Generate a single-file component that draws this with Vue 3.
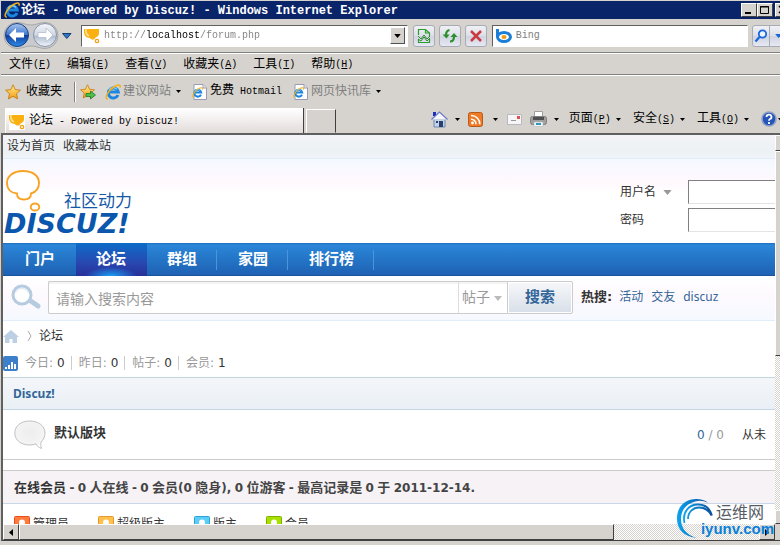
<script setup>
const menus = [
  ['文件', 'F'],
  ['编辑', 'E'],
  ['查看', 'V'],
  ['收藏夹', 'A'],
  ['工具', 'T'],
  ['帮助', 'H'],
]
const commands = [
  ['页面', 'P'],
  ['安全', 'S'],
  ['工具', 'O'],
]
const navItems = ['门户', '论坛', '群组', '家园', '排行榜']
const stats = [
  ['今日', 0],
  ['昨日', 0],
  ['帖子', 0],
  ['会员', 1],
]
const roles = [
  { name: '管理员', edge: '#e8501a', fill: '#ff7a3c' },
  { name: '超级版主', edge: '#e8962a', fill: '#ffc04c' },
  { name: '版主', edge: '#2aa4d8', fill: '#5ccdf5' },
  { name: '会员', edge: '#7fb000', fill: '#a8e000' },
]
</script>

<template>
  <svg class="defs" width="0" height="0" aria-hidden="true">
    <defs>
      <linearGradient id="gBlue" x1="0" y1="0" x2="0" y2="1">
        <stop offset="0" stop-color="#a9c6ef" />
        <stop offset=".48" stop-color="#3f77cf" />
        <stop offset=".52" stop-color="#0f3f9f" />
        <stop offset="1" stop-color="#2f8be8" />
      </linearGradient>
      <linearGradient id="gPale" x1="0" y1="0" x2="0" y2="1">
        <stop offset="0" stop-color="#f4f6fa" />
        <stop offset=".5" stop-color="#d0d8e4" />
        <stop offset=".55" stop-color="#b0bccf" />
        <stop offset="1" stop-color="#f0f6fc" />
      </linearGradient>
      <linearGradient id="gStar" x1="0" y1="0" x2="0" y2="1">
        <stop offset="0" stop-color="#fff09a" />
        <stop offset="1" stop-color="#f59a0c" />
      </linearGradient>
      <linearGradient id="gRing" x1="0" y1="0" x2="1" y2="0">
        <stop offset="0" stop-color="#0aa4f0" />
        <stop offset="1" stop-color="#0b4f9c" />
      </linearGradient>
      <radialGradient id="gBubble" cx=".5" cy=".4" r=".6">
        <stop offset="0" stop-color="#ededed" />
        <stop offset=".8" stop-color="#f4f4f4" />
        <stop offset="1" stop-color="#fff" />
      </radialGradient>
      <symbol id="ie" viewBox="0 0 16 16">
        <path d="M13 11A5 5 0 1 1 13.300 8H5" fill="none" stroke="#1c86e0" stroke-width="3" />
        <path d="M12 5.400A4.800 4.800 0 0 0 4 6" fill="none" stroke="#7fd4fb" stroke-width="1.200" />
        <path d="M2.800 14.900C.2 15 .8 11.500 3.400 8.200 6.600 3.800 12 .4 14.400 1.200c1 .4.9 1.600.5 2.600" fill="none" stroke="#f0b21c" stroke-width="1.500" />
      </symbol>
      <symbol id="fav" viewBox="0 0 16 16">
        <path fill="#fff" d="M0 0h16v16H0z" />
        <path d="M0 1h15v5c-1 3-3 3-4 4 0 2-4 2-5 0C2 10 0 7 0 4z" fill="#f9b010" />
        <path d="M2 1c-1 3 1 6 3 7" stroke="#ffe08a" stroke-width="1.800" fill="none" />
        <circle cx="13" cy="13" r="1.700" fill="#fff" stroke="#f9a010" stroke-width="1.300" />
      </symbol>
      <symbol id="star" viewBox="0 0 16 16">
        <path d="M8 .8l2.200 4.800 5.200.6-3.900 3.500 1.100 5.200L8 12.300l-4.600 2.600 1.100-5.200L.6 6.200l5.200-.6z" fill="url(#gStar)" stroke="#c87a10" stroke-width=".9" />
      </symbol>
      <symbol id="iepage" viewBox="0 0 16 16">
        <path d="M2 .5h9L14.500 4v11.500H2z" fill="#fff" stroke="#9a9ab0" />
        <path d="M11 .5V4h3.500" fill="#e4e4ee" stroke="#9a9ab0" />
        <use href="#ie" x="0" y="3" width="11" height="11" />
      </symbol>
      <symbol id="down" viewBox="0 0 5 3"><path d="M0 0h5L2.500 3z" fill="currentColor" /></symbol>
    </defs>
  </svg>

  <div class="window">
    <header class="titlebar">
      <svg width="16" height="16"><use href="#ie" /></svg>
      <h1>论坛<span> - Powered by Discuz! - Windows Internet Explorer</span></h1>
      <div class="winbtns">
        <button aria-label="Minimize"><svg width="12" height="10"><path d="M2 7h6v2H2z" /></svg></button>
        <button aria-label="Maximize"><svg width="12" height="10"><path d="M1.500 1.500h8v7h-8zM1 2h9" fill="none" stroke="#000" /></svg></button>
        <button class="close" aria-label="Close"><svg width="12" height="10"><path d="M2 1l7 7M9 1L2 8" stroke="#000" stroke-width="1.500" /></svg></button>
      </div>
    </header>

    <div class="toolbar">
      <div class="travel">
        <svg width="56" height="29" viewBox="0 0 56 29">
          <path d="M14 1.500C20 1.500 22 4 28 4S36 1.500 42 1.500a13 13 0 0 1 0 26C36 27.500 34 25 28 25s-8 2.500-14 2.500a13 13 0 0 1 0-26z" fill="#c8cacd" stroke="#a8a8aa" />
          <circle cx="14" cy="14" r="11.500" fill="url(#gBlue)" stroke="#1b3f80" />
          <circle cx="42" cy="14" r="11.500" fill="url(#gPale)" stroke="#8894a8" />
          <path d="M6 14l7-7v4.500h8v5h-8V21z" fill="#fff" />
          <path d="M50 14l-7-7v4.500h-8v5h8V21z" fill="#fff" stroke="#b4bccb" stroke-width=".8" />
        </svg>
        <svg class="recent" width="10" height="6" viewBox="0 0 10 6"><path d="M.5.500h8.500L4.800 5.500z" fill="#2f78c8" stroke="#123c70" /></svg>
      </div>
      <div class="field address">
        <svg width="16" height="16"><use href="#fav" /></svg>
        <input aria-label="Address" value="http://localhost/forum.php" />
        <button aria-label="Show addresses"><svg width="7" height="4" viewBox="0 0 5 3"><use href="#down" /></svg></button>
      </div>
      <button class="tool" aria-label="Compatibility view">
        <svg width="14" height="16"><path d="M1.500 7V1.500h7L12.500 5v3M1.500 11v3.500h11V11M8.500 1.500V5h4" fill="none" stroke="#2f9a2f" stroke-width="1.200" /><path d="M1 8l3 3 3-4 3 4 3-3M1 11l3 2 3-4 3 4 3-3" fill="none" stroke="#2f8a2f" /></svg>
      </button>
      <button class="tool" aria-label="Refresh">
        <svg width="16" height="16"><path d="M0.500 6.500l4 4 3-4zM8.500 9l3.500-4 3.500 4z" fill="#2b8f2b" /><path d="M7.500 2C5 2.500 4 4 4 7M8 13.500c3 0 4-2 4-5" fill="none" stroke="#2b8f2b" stroke-width="2.200" /></svg>
      </button>
      <button class="tool" aria-label="Stop">
        <svg width="14" height="14"><path d="M2 2l10 10M12 2L2 12" stroke="#c93a42" stroke-width="2.500" /></svg>
      </button>
      <div class="field bing">
        <svg width="17" height="16"><path d="M2.500 1v8" stroke="#1b7fd8" stroke-width="3" /><ellipse cx="9" cy="9" rx="6.500" ry="4.500" fill="none" stroke="#1b7fd8" stroke-width="3" /><ellipse cx="9" cy="9" rx="2.500" ry="2" fill="#f59a10" /></svg>
        <input aria-label="Search the web" placeholder="Bing" />
      </div>
      <div class="tool split">
        <button aria-label="Search"><svg width="14" height="14"><circle cx="8.500" cy="5" r="3.700" fill="#eaf4ff" stroke="#1a64dc" stroke-width="1.800" /><path d="M5.500 8L1.500 12.500" stroke="#1a64dc" stroke-width="2.200" /></svg></button>
        <button aria-label="Search options"><svg width="7" height="4" class="blue"><use href="#down" /></svg></button>
      </div>
    </div>

    <nav class="menubar">
      <button v-for="m in menus" :key="m[0]">{{ m[0] }}<span class="en">(<u>{{ m[1] }}</u>)</span></button>
    </nav>

    <div class="favbar">
      <button class="favs"><svg width="16" height="16"><use href="#star" /></svg>收藏夹</button>
      <button class="add" aria-label="Add to favorites bar">
        <svg width="17" height="16"><use href="#star" width="15" height="15" /><path d="M6 9.500h4.500V7l5 4-5 4v-2.500H6z" fill="#4cc04c" stroke="#1f7a1f" stroke-width=".8" /></svg>
      </button>
      <a href="#" class="dim"><svg width="16" height="16"><use href="#ie" /></svg>建议网站<svg class="caret" width="5" height="3"><use href="#down" /></svg></a>
      <a href="#"><svg width="16" height="16"><use href="#iepage" /></svg><span>免费<span class="en"> Hotmail</span></span></a>
      <a href="#" class="dim"><svg width="16" height="16"><use href="#iepage" /></svg>网页快讯库<svg class="caret" width="5" height="3"><use href="#down" /></svg></a>
    </div>

    <div class="tabbar">
      <button class="tab"><svg width="16" height="16"><use href="#fav" /></svg><b>论坛<span class="en"> - Powered by Discuz!</span></b></button>
      <button class="newtab" aria-label="New tab"></button>
      <div class="commands">
        <button class="cmd" aria-label="Home">
          <svg width="17" height="17"><path d="M2 1h3v4H2z" fill="#1c2fbc" /><path d="M3 8h11v8H3z" fill="#c4d3e6" stroke="#6a8ab0" /><path d="M0.500 8.500L8.500 1l8 7.500" fill="#f4f6fa" stroke="#6a78c8" stroke-width="1.200" /><path d="M8 10h4v6H8z" fill="#27406e" /><path d="M5 10h2v2H5z" fill="#27406e" /></svg>
          <svg class="caret" width="5" height="3"><use href="#down" /></svg>
        </button>
        <button class="cmd rss" aria-label="Feeds">
          <svg width="15" height="15"><rect x=".5" y=".5" width="14" height="14" rx="2" fill="#f07a24" stroke="#b85a18" /><circle cx="4.500" cy="11" r="1.400" fill="#fff" /><path d="M3 7.200a4.800 4.800 0 0 1 5 5M3 3.500a8.500 8.500 0 0 1 8.800 8.700" fill="none" stroke="#fff" stroke-width="1.600" /></svg>
          <svg class="caret" width="5" height="3"><use href="#down" /></svg>
        </button>
        <button class="cmd mail" aria-label="Read mail">
          <svg width="15" height="11"><path d="M.5.500h14v10H.5z" fill="#f6f6f6" stroke="#b8b8c0" /><path d="M10 2h3v3h-3z" fill="#e05050" /><path d="M4 6.500h5" stroke="#999" /></svg>
        </button>
        <button class="cmd print" aria-label="Print">
          <svg width="17" height="16"><path d="M4.500.500h8v5h-8z" fill="#fff" stroke="#a0a0a0" /><rect x=".5" y="5.500" width="16" height="8" rx="2" fill="#a0a0a0" stroke="#808080" /><path d="M3 6h11v3H3z" fill="#505050" /><path d="M4 11h9v4.500H4z" fill="#eef6fa" stroke="#bbb" stroke-width=".6" /><path d="M6 12h5v2H6z" fill="#2f98b8" /></svg>
          <svg class="caret" width="5" height="3"><use href="#down" /></svg>
        </button>
        <button v-for="c in commands" :key="c[0]" class="cmd word">
          <span>{{ c[0] }}<span class="en">(<u>{{ c[1] }}</u>)</span></span>
          <svg class="caret" width="5" height="3"><use href="#down" /></svg>
        </button>
        <button class="cmd help" aria-label="Help">
          <svg width="16" height="16"><circle cx="8" cy="8" r="7" fill="#2555b8" stroke="#8da0c4" stroke-width="1.600" /><path d="M5.500 6a2.500 2.300 0 1 1 3.500 2c-.8.400-1 .8-1 1.800M8 11v2" fill="none" stroke="#fff" stroke-width="1.800" /></svg>
          <svg class="caret" width="5" height="3"><use href="#down" /></svg>
        </button>
      </div>
    </div>

    <div class="frame">
      <main class="page">
        <div class="topbar"><a href="#">设为首页</a><a href="#">收藏本站</a></div>

        <div class="head">
          <div class="logo">
            <svg width="42" height="46" viewBox="0 0 42 46"><path d="M19 2C9 2 3 7.500 3 14c0 6 4 10 10 10.500 0 4 3 6 7 6s7-2 7-6C32 23 35 19 35 14 35 7 29 2 19 2z" fill="#fff" stroke="#f8a324" stroke-width="1.900" /><ellipse cx="31" cy="38" rx="4.300" ry="3.500" fill="#fff" stroke="#f8a324" stroke-width="1.900" /></svg>
            <span class="slogan">社区动力</span>
            <strong>DISCUZ!</strong>
          </div>
          <form class="login" @submit.prevent>
            <label for="user">用户名<svg width="9" height="5" viewBox="0 0 5 3"><use href="#down" /></svg></label>
            <input id="user" type="text" />
            <label for="pass">密码</label>
            <input id="pass" type="password" />
          </form>
        </div>

        <nav class="nav">
          <a v-for="(n, i) in navItems" :key="n" href="#" :class="{ on: i === 1, plain: i === 0 }">{{ n }}</a>
        </nav>

        <form class="search" @submit.prevent>
          <svg class="lens" width="30" height="26" viewBox="0 0 30 26"><path d="M19 16.500l8 5.500" stroke="#b6cbe0" stroke-width="5" stroke-linecap="round" /><circle cx="11" cy="11" r="9" fill="#fff" stroke="#b6cbe0" stroke-width="3" /><path d="M4.500 9a7 7 0 0 1 13 0" fill="none" stroke="#dce6f0" /></svg>
          <div class="box">
            <input aria-label="搜索" placeholder="请输入搜索内容" />
            <button type="button">帖子<svg width="8" height="5" viewBox="0 0 5 3"><use href="#down" /></svg></button>
          </div>
          <button class="go">搜索</button>
          <div class="hot"><b>热搜:</b><a href="#">活动</a><a href="#">交友</a><a href="#" class="tah">discuz</a></div>
        </form>

        <div class="crumbs">
          <svg width="16" height="14"><path d="M8 1l8 7h-2v6H9.500v-4h-3v4H2V8H0z" fill="#bccfe3" /></svg>
          <svg class="sep" width="5" height="12"><path d="M1 1l3 5-3 5" fill="none" stroke="#aaa" /></svg>
          <a href="#">论坛</a>
        </div>

        <div class="stats">
          <svg width="15" height="15"><rect width="15" height="15" rx="2" fill="#3c80cc" /><path d="M2 11h2v2H2zM5 9h2v4H5zM8 6h2v7H8zM11 8h2v5h-2z" fill="#fff" /></svg>
          <span v-for="s in stats" :key="s[0]" class="stat">{{ s[0] }}<i>:</i><em>{{ s[1] }}</em></span>
        </div>

        <section class="board">
          <h2>Discuz!</h2>
          <div class="row">
            <svg width="32" height="30" viewBox="0 0 32 30"><path d="M15.500 1C7 1 .8 6 .8 13c0 7 6 12 14.700 12 2.500 0 4.500-.4 6.500-1.200 1 2.500 3 4 5.500 4.500-.8-2-.8-4-.5-6.300 2.500-2.200 4-5.500 4-9C31 6 24.500 1 15.500 1z" fill="url(#gBubble)" stroke="#c0c0c0" /></svg>
            <a href="#" class="name">默认版块</a>
            <span class="count"><b>0</b> / 0</span>
            <span class="never">从未</span>
          </div>
        </section>

        <section class="online">
          <h3><a href="#">在线会员</a> <s>-</s> <s>0</s> 人在线 <s>-</s> <s>0</s> 会员<s>(0</s> 隐身<s>),</s> <s>0</s> 位游客 <s>-</s> 最高记录是 <s>0</s> 于 <s>2011-12-14.</s></h3>
          <ul>
            <li v-for="r in roles" :key="r.name">
              <svg width="16" height="16"><rect x=".5" y=".5" width="15" height="15" rx="1" :fill="r.fill" :stroke="r.edge" /><circle cx="8" cy="6.500" r="3" fill="#fff" /><path d="M3 15c0-4 2-6 5-6s5 2 5 6z" fill="#fff" /></svg>{{ r.name }}
            </li>
          </ul>
        </section>
      </main>

      <div class="vbar"><i class="btn"></i><i class="thumb"></i><i class="track"></i><i class="btn"></i></div>
      <div class="hbar">
        <i class="btn"><svg width="4" height="7"><path d="M4 0v7L0 3.500z" /></svg></i><i class="thumb"></i><i class="track"></i><i class="btn"><svg width="4" height="7"><path d="M0 0v7l4-3.500z" /></svg></i>
      </div>
      <i class="corner"></i>
    </div>

    <div class="mark">
      <svg width="38" height="42" viewBox="0 0 38 42"><path d="M21 40C6 38 1 30 1 20 1 9 9 1 20 1c5 0 9 1 12 4-4-2-8-3-13-1.500C10 6 5 12 5 21c0 9 5 16 16 19z" fill="url(#gRing)" /><path d="M8.500 25C6 14 13 6.500 22 6.500c7 0 12 4 14 11M12 21c0-7 5-11.500 11-11.500 6 0 10 3 12.500 8" fill="none" stroke="url(#gRing)" stroke-width="1.800" /></svg>
      <span>运维网</span>
      <strong>iyunv.com</strong>
    </div>
  </div>
</template>

<style>
body { margin: 0; background: #d6d3ce; }
</style>

<style scoped>
.defs { position: absolute; }
* { box-sizing: border-box; }
svg { flex: none; display: block; }
button { font: inherit; color: inherit; border: 0; padding: 0; background: none; display: flex; align-items: center; }
a { color: inherit; text-decoration: none; }
input { border: 0; padding: 0; outline: 0; min-width: 0; font: inherit; background: none; }
.window { position: relative; height: 100vh; display: flex; flex-direction: column; overflow: hidden; background: #d6d3ce; padding: 1px 0 4px 1px; font: 12px/16px "Liberation Mono", "Noto Sans CJK SC", monospace; color: #000; white-space: nowrap; }
.en { font-size: 10px; white-space: pre; }
.caret { color: #000; }

.titlebar { flex: none; height: 18px; background: #0a246a; color: #fff; display: flex; align-items: center; padding-left: 3px; }
.titlebar h1 { margin: 0 auto 0 1px; font-size: 12px; line-height: 18px; padding-top: 2px; }
.titlebar h1 span { white-space: pre; }
.winbtns { display: flex; margin-right: -11px; }
.winbtns button { width: 16px; height: 14px; justify-content: center; background: #d6d3ce; border: 1px solid; border-color: #fff #404040 #404040 #fff; }
.winbtns .close { margin-left: 2px; }

.toolbar { flex: none; height: 34px; display: flex; align-items: center; padding: 0 0 0 2px; margin-right: -14px; border-bottom: 1px solid #808080; }
.travel { display: flex; align-items: center; width: 78px; flex: none; gap: 3px; }
.field { display: flex; align-items: center; height: 22px; background: #fff; border: 1px solid; border-color: #606060 #fff #fff #606060; padding: 2px; }
.field input { flex: 1; font-size: 10px; height: 16px; }
.address { flex: 327 1 0; gap: 4px; margin-right: 5px; }
.address input { color: transparent; background: linear-gradient(90deg, #808080 42px, #000 42px, #000 96px, #808080 96px); -webkit-background-clip: text; background-clip: text; }
.address button { width: 15px; height: 17px; justify-content: center; background: #d6d3ce; border: 1px solid; border-color: #fff #505050 #505050 #fff; }
.bing { flex: 255 1 0; gap: 4px; margin: 0 4px 0 1px; }
.bing input::placeholder { color: #808080; opacity: 1; }
.tool { flex: none; width: 22px; height: 22px; margin-right: 4px; justify-content: center; border: 1px solid #a8abb4; border-radius: 3px; background: linear-gradient(#f0f1f6, #dcdfe8 50%, #d0d4e0 52%, #e6e9f4); }
.split { display: flex; width: 42px; margin: 0; }
.split button { flex: 1; justify-content: center; }
.split button + button { border-left: 1px solid #a8abb4; padding-right: 7px; }
.blue { color: #1a64dc; }

.menubar { flex: none; height: 22px; display: flex; align-items: center; padding-top: 2px; border-top: 1px solid #fff; border-bottom: 1px solid #808080; }
.menubar button { padding: 0 8px; }

.favbar { flex: none; height: 32px; display: flex; align-items: center; border-top: 1px solid #fff; padding-left: 4px; }
.favbar a { display: flex; align-items: center; gap: 2px; margin-right: 11px; }
.favbar .caret { margin-left: 3px; }
.favs { gap: 5px; padding-right: 12px; }
.add { height: 20px; border-left: 1px solid #808080; box-shadow: inset 1px 0 #fff; padding: 0 8px 0 5px; }
.dim { color: #808080; }

.tabbar { flex: none; height: 26px; display: flex; align-items: flex-end; padding-left: 4px; margin-right: -4px; }
.tab { width: 298px; flex: none; height: 25px; gap: 4px; padding: 1px 0 0 3px; border: 1px solid #fff; border-width: 1px 0 0 1px; box-shadow: 1px 0 #404040; background: linear-gradient(#fff, #e2dbd9); }
.tab b { font-weight: normal; }
.newtab { width: 30px; flex: none; height: 24px; margin-left: 3px; border: 1px solid; border-color: #fff #404040 transparent #fff; }
.commands { margin-left: auto; height: 26px; padding-bottom: 2px; display: flex; align-items: center; }
.cmd { gap: 7px; margin-right: 8px; }
.cmd.rss { gap: 10px; margin-right: 9px; }
.cmd.mail { margin-right: 8px; }
.cmd.print { margin-right: 10px; }
.cmd.word { gap: 5px; margin-right: 12px; }
.cmd.help { gap: 1px; margin-right: 1px; }

.frame { flex: 1; min-height: 0; display: grid; grid-template-columns: minmax(0, 1fr) 5px; grid-template-rows: minmax(0, 1fr) 16px; border: 1px solid #404040; border-width: 2px 0 1px 2px; border-color: #606060 #606060 #404040 #606060; overflow: hidden; }
.page { overflow: hidden; background: #fff; color: #333; font-family: "DejaVu Sans", "Noto Sans CJK SC", sans-serif; }
.page > * { width: 100%; }
.topbar { height: 24px; display: flex; align-items: center; gap: 8px; padding: 0 4px 2px; background: linear-gradient(#f3f4f8, #ecf1f3 70%, #f0f4fa); border-bottom: 1px solid #e0ecf8; }
.head { height: 84px; display: flex; justify-content: space-between; background: linear-gradient(#f4f9ff, #fff8fd 24px, #fff 34px); }
.logo { display: grid; grid-template-columns: 42px auto; grid-template-rows: 45px 24px; align-content: start; align-items: start; padding: 8px 0 0 1px; }
.logo svg { margin-top: 2px; }
.slogan { align-self: end; padding: 0 0 1px 18px; font-size: 17px; line-height: 20px; color: #1459a8; }
.logo strong { grid-column: 1 / 3; font: italic bold 27px/24px "DejaVu Sans", sans-serif; color: #0a57ad; }
.login { display: grid; grid-template-columns: 68px 110px; grid-template-rows: 24px 24px; row-gap: 4px; align-content: start; align-items: center; padding-top: 21px; margin-right: -23px; }
.login label { display: flex; align-items: center; gap: 6px; }
.login label svg { color: #999; margin-left: 1px; }
.login input { height: 24px; background: #fff; border: 1px solid; border-color: #808080 #e4e4e4 #e4e4e4 #808080; }

.nav { height: 33px; display: flex; padding-left: 2px; background: linear-gradient(#1f6fc0, #2c86d8 2px, #2578ca 40%, #1f62b4 96%, #174a8c); }
.nav a { font-size: 15px; font-weight: bold; color: #fff; line-height: 33px; padding: 0 20px; border-right: 1px solid transparent; background: linear-gradient(#4c94dc, #4c94dc) right / 1px 20px no-repeat; }
.nav .plain { background: none; }
.nav .on { background: radial-gradient(ellipse 26px 9px at 50% 100%, #1aa0f4, transparent), linear-gradient(#0c6cc8, #2848b0 60%, #28309a); }

.search { height: 45px; display: flex; align-items: center; padding: 0 0 2px 8px; background: linear-gradient(#fff, #fdf9fe 45%, #f5f9ff); border-bottom: 1px solid #e0ecf8; margin: 0; }
.lens { margin-right: 7px; }
.box { flex: 1; display: flex; height: 33px; background: #fff; border: 1px solid #ccc; border-right: 0; box-shadow: inset 0 2px #f4f4f4; border-radius: 2px 0 0 2px; color: #999; font-size: 14px; }
.box input { flex: 1; padding: 3px 0 0 7px; font-size: 14px; }
.box input::placeholder { color: #999; opacity: 1; }
.box button { width: 49px; gap: 4px; padding-left: 3px; border-left: 1px solid #ddd; }
.box button svg { color: #bbb; margin-top: 2px; }
.go { width: 66px; height: 33px; justify-content: center; border: 1px solid #ccc; border-radius: 0 2px 2px 0; box-shadow: inset 0 0 0 1px #fff; background: linear-gradient(#f6f7fa, #d8dfe8); color: #369; font-weight: bold; font-size: 15px; }
.hot { display: flex; gap: 8px; width: 202px; padding-left: 8px; color: #369; }
.hot b { color: #333; font-size: 13px; margin-right: -1px; }
.tah { font-family: "Noto Sans", sans-serif; }

.crumbs { height: 30px; display: flex; align-items: center; }
.crumbs .sep { margin: 0 7px 0 8px; }
.stats { height: 26px; display: flex; align-items: center; padding-bottom: 2px; color: #999; }
.stat { display: flex; line-height: 14px; padding: 0 7px; }
.stat + .stat { box-shadow: -1px 0 #ccc; }
.stat i { font-style: normal; width: 8px; }
.stat em { font-style: normal; color: #333; }

.board h2 { margin: 0; height: 33px; padding-left: 10px; font: bold 12px/31px "Noto Sans", sans-serif; color: #369; border: 1px solid #c2d5e3; border-width: 1px 0; background: linear-gradient(#f4f6f9, #e9eff5); }
.row { height: 50px; display: flex; align-items: center; padding: 0 9px 0 11px; border-bottom: 1px solid #ccc; }
.name { margin: 0 auto 4px 8px; font-size: 13px; font-weight: bold; }
.count { color: #999; margin-right: 18px; }
.count b { font-weight: normal; color: #369; }
.online { margin-top: 10px; border-top: 1px solid #ccc; }
.online h3 { margin: 0; height: 33px; padding-left: 11px; font: bold 13px/32px "Noto Sans", "Noto Sans CJK SC", sans-serif; color: #444; background: #f6f2f6; border-bottom: 1px solid #c8d6e6; }
.online h3 a { color: #333; }
.online s { text-decoration: none; font: bold 12px/16px "DejaVu Sans", sans-serif; }
.online ul { list-style: none; margin: 0; padding: 12px 11px; display: flex; gap: 29px; }
.online li { display: flex; gap: 3px; }

.btn, .thumb { display: grid; place-items: center; background: #d6d3ce; border: 1px solid; border-color: #fff #404040 #404040 #fff; }
.track { background: repeating-conic-gradient(#fff 0 25%, #d6d3ce 0 50%) 0 0 / 2px 2px; }
.vbar { display: grid; width: 16px; grid-template-rows: 16px 205fr 154fr 14px; }
.hbar { display: grid; grid-template-columns: 16px 595fr 145fr 16px; }
.corner { background: #d6d3ce; }

.mark { position: absolute; right: 6px; bottom: 5px; width: 98px; height: 42px; color: #0a7fd8; }
.mark svg { position: absolute; left: 0; top: 0; }
.mark span { position: absolute; right: 10px; top: 4px; font: 16px/18px "Noto Sans CJK SC", sans-serif; color: #555c66; }
.mark strong { position: absolute; right: 0; top: 22px; font: bold 15px/18px "Liberation Sans", sans-serif; }
</style>
